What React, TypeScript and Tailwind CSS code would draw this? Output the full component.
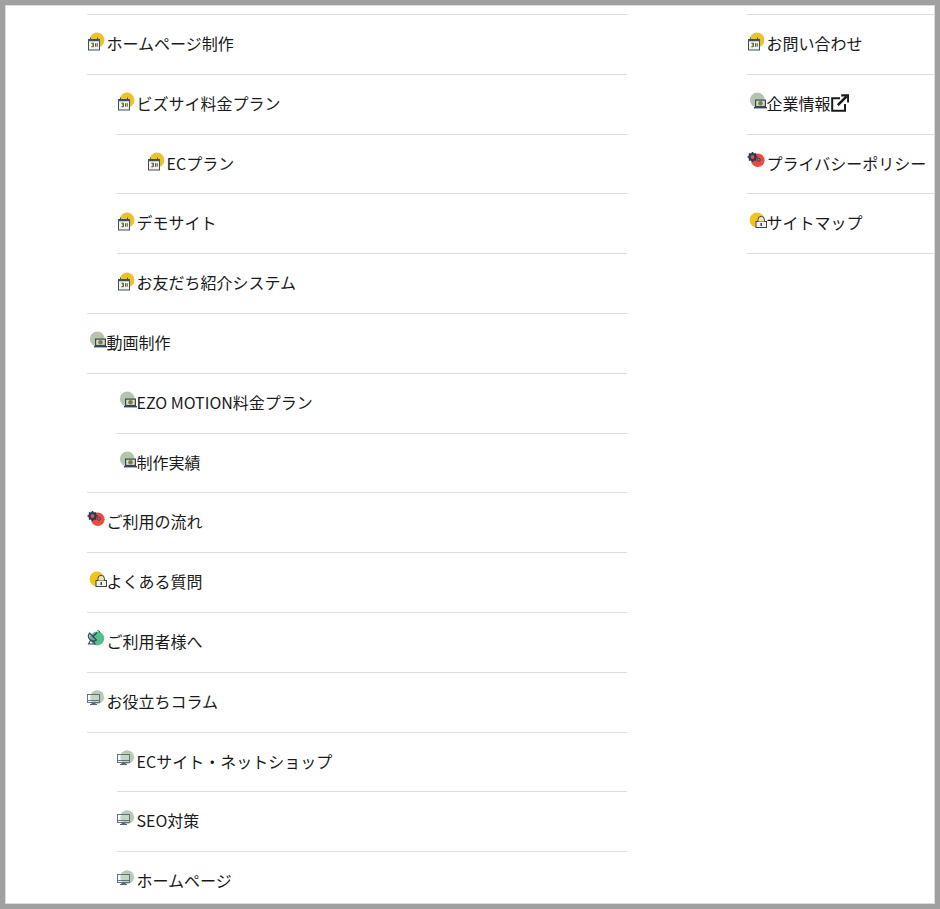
import React from "react";

const S = "#34465c";

function Svg({ children }: { children: React.ReactNode }) {
  return (
    <svg viewBox="0 -1 20 24" className="-mr-[0.5px] h-6 w-5 shrink-0 overflow-visible" fill="none">
      {children}
    </svg>
  );
}

const Calendar = () => (
  <Svg>
    <circle cx="10" cy="8" r="7.4" fill="#eac22a" />
    <rect x="1.5" y="7.5" width="11" height="10.5" fill="#f2f2e6" stroke="#3f5066" />
    <rect x="1" y="7" width="12" height="2.2" fill="#3f5066" />
    <path d="M3.5 5.6v2M10.5 5.6v2" stroke="#3f5066" />
    <path d="M4.4 11.2h2v1.6h-1.2M6.4 12.8v1.9h-2M8.6 11.2v3.5M10.2 11.2v3.5" stroke="#4f4f2a" strokeWidth="1" />
  </Svg>
);

const Laptop = () => (
  <Svg>
    <circle cx="10.3" cy="8" r="7.4" fill="#b5c4ad" />
    <rect x="8" y="7.5" width="11" height="7.5" fill={S} />
    <rect x="9.2" y="8.7" width="8.6" height="5.2" fill="#d9dccb" />
    <circle cx="13.5" cy="11.2" r="2.3" fill="#7b7f3c" />
    <rect x="7" y="15" width="13" height="1.4" fill={S} />
  </Svg>
);

const Gears = () => (
  <Svg>
    <circle cx="10.8" cy="8.3" r="6.8" fill="#ea4a40" />
    <circle cx="5.5" cy="5" r="3" fill="#e0563a" stroke="#263a5a" strokeWidth="2.2" />
    <path d="M5.5 0v2M5.5 8v2M0.5 5h2M8.5 5h2M2 1.5l1.4 1.4M7.6 7.1l1.4 1.4M2 8.5l1.4-1.4M7.6 2.9l1.4-1.4" stroke="#263a5a" strokeWidth="1.6" />
    <circle cx="11.8" cy="7.8" r="1.6" stroke={S} strokeWidth="0.9" />
  </Svg>
);

const Lock = () => (
  <Svg>
    <circle cx="10" cy="8" r="7.4" fill="#f0c419" />
    <rect x="9" y="9.5" width="10.5" height="6" fill="#f6f1dc" stroke={S} />
    <path d="M11 9.5V7.5a3.2 3.2 0 0 1 6.4 0v2" stroke={S} fill="#f6e7a6" />
    <rect x="13.5" y="11" width="1.5" height="3" fill={S} />
  </Svg>
);

const Satellite = () => (
  <Svg>
    <circle cx="10.2" cy="8.4" r="7" fill="#57bd8c" />
    <path d="M2.5 3 L9.5 10 A5 5 0 0 1 2.5 3 Z" fill="#7f97a0" fillOpacity="0.55" stroke={S} strokeWidth="1.1" />
    <path d="M6 6.5 L10 2.5M4 9.5l-2.5 4.5h6.5L5.8 10.5" stroke={S} strokeWidth="1.1" />
    <path d="M10.5 0.5a2.6 2.6 0 0 1 2.5 2.3" stroke={S} strokeWidth="0.9" />
  </Svg>
);

const Monitor = () => (
  <Svg>
    <circle cx="10.2" cy="7.2" r="6.9" fill="#b9c9b3" />
    <rect x="0.5" y="4.5" width="12" height="8" fill="#e6eeee" fillOpacity="0.3" stroke="#566778" strokeWidth="0.9" />
    <path d="M0.5 10.5h12" stroke="#566778" strokeWidth="0.9" />
    <rect x="4.5" y="12.5" width="4" height="1.5" fill="#566778" />
    <rect x="3" y="14" width="7" height="1" fill="#566778" />
  </Svg>
);

const ExternalLink = () => (
  <svg viewBox="0 0 18 18" className="h-[18px] w-[18px] shrink-0" fill="none" stroke="#1a1a1a">
    <path d="M9 4.2H1.2v12.6H14V10" strokeWidth="2" />
    <path d="M6.8 11.2 15.6 2.4" strokeWidth="2.6" />
    <path d="M10.2 1.4h7v7" strokeWidth="2.2" />
  </svg>
);

type RowT = {
  t: string;
  I: () => React.ReactElement;
  d?: 0 | 1 | 2;
  /** indent of the rule under the row */
  line?: 0 | 1;
  ext?: boolean;
};

const left: RowT[] = [
  { t: "ホームページ制作", I: Calendar },
  { t: "ビズサイ料金プラン", I: Calendar, d: 1, line: 1 },
  { t: "ECプラン", I: Calendar, d: 2, line: 1 },
  { t: "デモサイト", I: Calendar, d: 1, line: 1 },
  { t: "お友だち紹介システム", I: Calendar, d: 1 },
  { t: "動画制作", I: Laptop },
  { t: "EZO MOTION料金プラン", I: Laptop, d: 1, line: 1 },
  { t: "制作実績", I: Laptop, d: 1 },
  { t: "ご利用の流れ", I: Gears },
  { t: "よくある質問", I: Lock },
  { t: "ご利用者様へ", I: Satellite },
  { t: "お役立ちコラム", I: Monitor },
  { t: "ECサイト・ネットショップ", I: Monitor, d: 1, line: 1 },
  { t: "SEO対策", I: Monitor, d: 1, line: 1 },
  { t: "ホームページ", I: Monitor, d: 1, line: 1 },
];

const right: RowT[] = [
  { t: "お問い合わせ", I: Calendar },
  { t: "企業情報", I: Laptop, ext: true },
  { t: "プライバシーポリシー", I: Gears },
  { t: "サイトマップ", I: Lock },
];

function Row({ r }: { r: RowT }) {
  const d = r.d ?? 0;
  const line = r.line ?? 0;
  const outer = line === 1 ? "ml-[30px]" : "";
  const rel = d - line;
  const inner = rel === 2 ? "pl-[60px]" : rel === 1 ? "pl-[30px]" : "";
  return (
    <li className={`${outer} ${inner} flex items-center border-b border-[#dddddd] pb-[16px] pt-[14px] text-[16px] leading-[28.8px] text-[#1a1a1a]`}>
      <r.I />
      <span className="whitespace-nowrap">{r.t}</span>
      {r.ext && <ExternalLink />}
    </li>
  );
}

function List({ rows }: { rows: RowT[] }) {
  return (
    <ul className="w-[540px] shrink-0 border-t border-[#dddddd]">
      {rows.map((r) => (
        <Row key={r.t} r={r} />
      ))}
    </ul>
  );
}

export default function App() {
  return (
    <div className="h-[909px] w-[940px] overflow-hidden border-[5px] border-[#a0a0a0] bg-white font-['Noto_Sans_CJK_JP','Noto_Sans',sans-serif]">
      <div className="flex h-full items-start gap-[120px] overflow-hidden border border-[#dcdcdc] pl-[81px] pt-[8px]">
        <List rows={left} />
        <List rows={right} />
      </div>
    </div>
  );
}
